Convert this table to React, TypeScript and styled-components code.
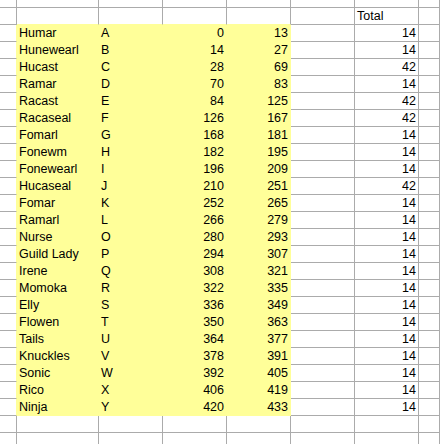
import React from 'react'
import styled, { createGlobalStyle } from 'styled-components'

const GRID = '#ababab'
const FILL = '#ffff99'

interface Row {
  name: string
  code: string
  start: number
  end: number
}

const rows: Row[] = [
  { name: 'Humar', code: 'A', start: 0, end: 13 },
  { name: 'Hunewearl', code: 'B', start: 14, end: 27 },
  { name: 'Hucast', code: 'C', start: 28, end: 69 },
  { name: 'Ramar', code: 'D', start: 70, end: 83 },
  { name: 'Racast', code: 'E', start: 84, end: 125 },
  { name: 'Racaseal', code: 'F', start: 126, end: 167 },
  { name: 'Fomarl', code: 'G', start: 168, end: 181 },
  { name: 'Fonewm', code: 'H', start: 182, end: 195 },
  { name: 'Fonewearl', code: 'I', start: 196, end: 209 },
  { name: 'Hucaseal', code: 'J', start: 210, end: 251 },
  { name: 'Fomar', code: 'K', start: 252, end: 265 },
  { name: 'Ramarl', code: 'L', start: 266, end: 279 },
  { name: 'Nurse', code: 'O', start: 280, end: 293 },
  { name: 'Guild Lady', code: 'P', start: 294, end: 307 },
  { name: 'Irene', code: 'Q', start: 308, end: 321 },
  { name: 'Momoka', code: 'R', start: 322, end: 335 },
  { name: 'Elly', code: 'S', start: 336, end: 349 },
  { name: 'Flowen', code: 'T', start: 350, end: 363 },
  { name: 'Tails', code: 'U', start: 364, end: 377 },
  { name: 'Knuckles', code: 'V', start: 378, end: 391 },
  { name: 'Sonic', code: 'W', start: 392, end: 405 },
  { name: 'Rico', code: 'X', start: 406, end: 419 },
  { name: 'Ninja', code: 'Y', start: 420, end: 433 },
]

const COLS = 8

const GlobalStyle = createGlobalStyle`
  html, body {
    margin: 0;
    padding: 0;
    background: #fff;
    overflow: hidden;
  }
`

const Sheet = styled.div`
  display: grid;
  grid-template-columns: 17px 82px 64px 64px 64px 64px 64px 1fr;
  grid-template-rows: 8px;
  grid-auto-rows: 17px;
  width: 440px;
  height: 444px;
  overflow: hidden;
  font-family: 'Liberation Sans', Arial, sans-serif;
  font-size: 12.5px;
  color: #000;
`

// a filled cell hides its own gridlines, like Excel does
const Cell = styled.div<{ $fill?: boolean; $fillRight?: boolean; $fillBottom?: boolean; $right?: boolean }>`
  box-sizing: border-box;
  border-right: 1px solid ${p => (p.$fill || p.$fillRight ? FILL : GRID)};
  border-bottom: 1px solid ${p => (p.$fill || p.$fillBottom ? FILL : GRID)};
  background: ${p => (p.$fill ? FILL : 'transparent')};
  padding: 0 2px;
  line-height: 16px;
  text-align: ${p => (p.$right ? 'right' : 'left')};
  white-space: nowrap;
  overflow: hidden;
`

function EmptyRow() {
  return (
    <>
      {Array.from({ length: COLS }).map((_, i) => (
        <Cell key={i} />
      ))}
    </>
  )
}

export default function App() {
  return (
    <>
      <GlobalStyle />
      <Sheet>
        <EmptyRow />

        <Cell />
        <Cell $fillBottom />
        <Cell $fillBottom />
        <Cell $fillBottom />
        <Cell $fillBottom />
        <Cell />
        <Cell>Total</Cell>
        <Cell />

        {rows.map(r => (
          <React.Fragment key={r.code}>
            <Cell $fillRight />
            <Cell $fill>{r.name}</Cell>
            <Cell $fill>{r.code}</Cell>
            <Cell $fill $right>{r.start}</Cell>
            <Cell $fill $right>{r.end}</Cell>
            <Cell />
            <Cell $right>{r.end - r.start + 1}</Cell>
            <Cell />
          </React.Fragment>
        ))}

        <EmptyRow />
        <EmptyRow />
      </Sheet>
    </>
  )
}
